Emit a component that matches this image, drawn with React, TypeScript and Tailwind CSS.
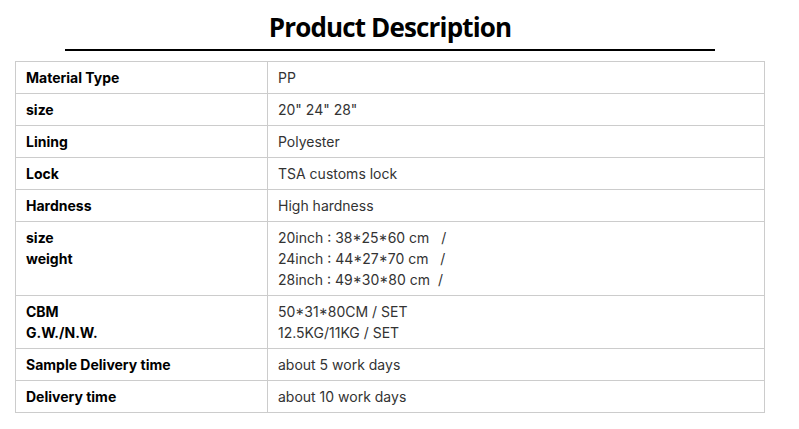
export default function App() {
  const rows: { label: string[]; value: string[] }[] = [
    { label: ["Material Type"], value: ["PP"] },
    { label: ["size"], value: ['20" 24" 28"'] },
    { label: ["Lining"], value: ["Polyester"] },
    { label: ["Lock"], value: ["TSA customs lock"] },
    { label: ["Hardness"], value: ["High hardness"] },
    {
      label: ["size", "weight"],
      value: [
        "20inch : 38*25*60 cm   /",
        "24inch : 44*27*70 cm   /",
        "28inch : 49*30*80 cm  /",
      ],
    },
    { label: ["CBM", "G.W./N.W."], value: ["50*31*80CM / SET", "12.5KG/11KG / SET"] },
    { label: ["Sample Delivery time"], value: ["about 5 work days"] },
    { label: ["Delivery time"], value: ["about 10 work days"] },
  ];
  return (
    <div className="w-[780px] bg-white pt-[9px]">
      <h2 className="text-center text-[26px] leading-[36px] font-bold tracking-[-0.85px] text-black font-['Open_Sans',sans-serif]">
        Product Description
      </h2>
      <div className="mx-auto mt-[4px] h-[2px] w-[650px] bg-black" />
      <table className="mx-[15px] mt-[10px] w-[750px] border-collapse font-['Inter',sans-serif] text-[14px] leading-[21px]">
        <tbody>
          {rows.map((r, i) => (
            <tr key={i}>
              <td className="w-[252px] border border-[#cccccc] px-[10px] py-[5px] align-top font-bold text-black">
                {r.label.map((l, j) => (
                  <div key={j}>{l}</div>
                ))}
              </td>
              <td className="border border-[#cccccc] px-[10px] py-[5px] align-top text-[#333333]">
                {r.value.map((v, j) => (
                  <div key={j} className="whitespace-pre">
                    {v}
                  </div>
                ))}
              </td>
            </tr>
          ))}
        </tbody>
      </table>
    </div>
  );
}
